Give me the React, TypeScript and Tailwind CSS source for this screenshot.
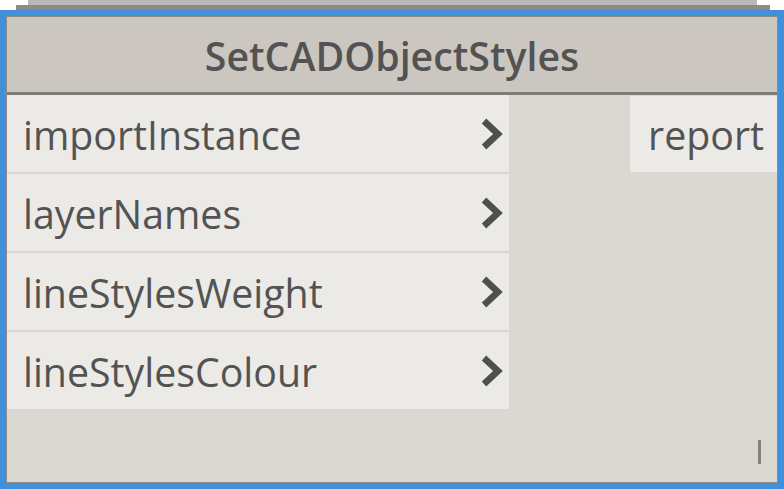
import React from 'react';

const inputs = ['importInstance', 'layerNames', 'lineStylesWeight', 'lineStylesColour'];

const Chevron = () => (
  <svg width="26" height="34" viewBox="0 0 26 34" className="shrink-0">
    <path d="M5 4 L19 17 L5 30" fill="none" stroke="#4f4f4f" strokeWidth="6.5" strokeLinejoin="miter" />
  </svg>
);

const App = () => {
  return (
    <div className="w-[784px] h-[489px] bg-white overflow-hidden font-['Open_Sans',sans-serif]">
      {/* nodes sitting behind */}
      <div className="h-[5px] ml-[28px] w-[729px] bg-[#b8b8b8]" />
      <div className="h-[5px] ml-[16px] w-[754px] bg-[#8b8b8b]" />

      <div className="h-[479px] border-[6px] border-[#4190d9]">
        <div className="h-full flex flex-col border border-[#8e8b87] bg-[#dbd8d2]">
          <div className="h-[78px] shrink-0 flex items-center justify-center bg-[#cbc7c0] border-b-[3px] border-[#7d7b79]">
            <span className="mt-[4px] text-[39.3px] font-semibold text-[#535353]">SetCADObjectStyles</span>
          </div>

          <div className="flex justify-between">
            <div className="w-[502px] flex flex-col">
              {inputs.map((name, i) => (
                <div
                  key={name}
                  className={`h-[77px] flex items-center justify-between pl-4 pr-[4px] bg-[#ebeae6] ${
                    i < inputs.length - 1 ? 'border-b-2 border-[#d9d6d0] h-[79px]' : ''
                  }`}
                >
                  <span className="mt-[4px] text-[39.3px] text-[#535353]">{name}</span>
                  <Chevron />
                </div>
              ))}
            </div>
            <div className="w-[147px] h-[76px] mt-px flex items-center justify-end pr-[13px] bg-[#ebeae6]">
              <span className="mt-[3px] text-[39.3px] text-[#535353]">report</span>
            </div>
          </div>

          <div className="flex-1 flex justify-end items-end pr-[16px] pb-[18px]">
            <div className="w-[3px] h-[24px] bg-[#85827e]" />
          </div>
        </div>
      </div>
    </div>
  );
};

export default App;
